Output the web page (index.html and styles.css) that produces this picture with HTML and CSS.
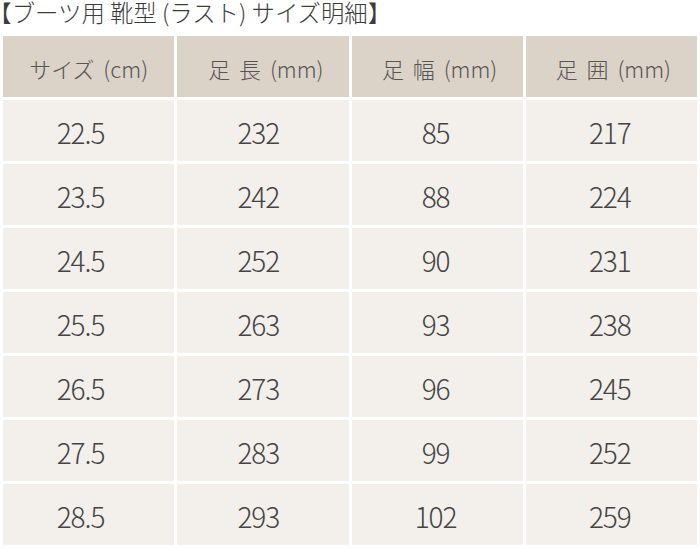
FILE: index.html
```html
<!DOCTYPE html>
<html lang="ja">
<head>
<meta charset="utf-8">
<title>ブーツ用 靴型 サイズ明細</title>
<link rel="stylesheet" href="styles.css">
</head>
<body>
<h1 class="title">【ブーツ用 靴型 (ラスト) サイズ明細】</h1>
<div class="size-table">
  <div class="cell head">サイズ (cm)</div>
  <div class="cell head">足 長 (mm)</div>
  <div class="cell head">足 幅 (mm)</div>
  <div class="cell head">足 囲 (mm)</div>

  <div class="cell">22.5</div><div class="cell">232</div><div class="cell">85</div><div class="cell">217</div>
  <div class="cell">23.5</div><div class="cell">242</div><div class="cell">88</div><div class="cell">224</div>
  <div class="cell">24.5</div><div class="cell">252</div><div class="cell">90</div><div class="cell">231</div>
  <div class="cell">25.5</div><div class="cell">263</div><div class="cell">93</div><div class="cell">238</div>
  <div class="cell">26.5</div><div class="cell">273</div><div class="cell">96</div><div class="cell">245</div>
  <div class="cell">27.5</div><div class="cell">283</div><div class="cell">99</div><div class="cell">252</div>
  <div class="cell">28.5</div><div class="cell">293</div><div class="cell">102</div><div class="cell">259</div>
</div>
</body>
</html>
```

FILE: styles.css
```css
html, body {
  margin: 0;
  padding: 0;
  background: #ffffff;
}

body {
  width: 700px;
  font-family: "Noto Sans CJK JP", "Noto Sans", sans-serif;
  color: #444444;
  overflow: hidden;
}

.title {
  margin: 0;
  height: 33px;
  font-size: 23.4px;
  font-weight: 300;
  line-height: 24px;
  color: #3c3c3c;
  white-space: nowrap;
  text-spacing-trim: trim-start;
}

.size-table {
  display: grid;
  grid-template-columns: repeat(4, 1fr);
  grid-auto-rows: 61px;
  gap: 3px;
  padding: 3px;
}

.cell {
  display: flex;
  align-items: center;
  justify-content: center;
  background: #f3efeb;
  font-size: 28px;
  font-weight: 300;
  letter-spacing: -1px;
  color: #444444;
  padding-top: 2px;
}

.cell:nth-child(4n+1) { padding-right: 16px; }
.cell:nth-child(4n+2) { padding-right: 9px; }
.cell:nth-child(4n+3) { padding-right: 3px; }
.cell:nth-child(4n+4) { padding-right: 3px; }

.cell.head {
  background: #dbd2c8;
  font-size: 22px;
  letter-spacing: 0;
  word-spacing: 4px;
  color: #555555;
  padding-top: 2px;
  padding-right: 0;
}

.cell.head:nth-child(1) { padding-right: 0; }
.cell.head:nth-child(2) { padding-left: 6px; }
.cell.head:nth-child(3) { padding-left: 5px; }
.cell.head:nth-child(4) { padding-left: 4px; }
```
